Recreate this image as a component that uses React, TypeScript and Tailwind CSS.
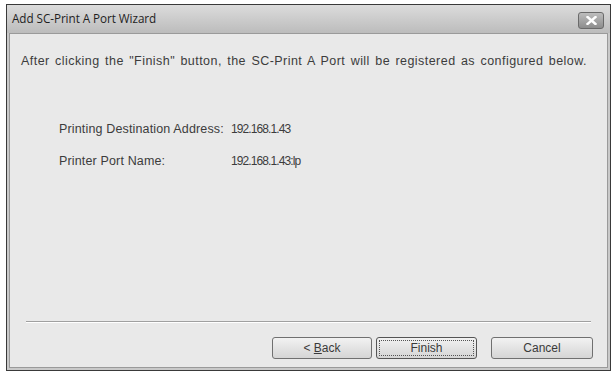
export default function App() {
  return (
    <div className="w-[615px] h-[373px] bg-white pt-[4px] pl-[6px] font-['Liberation_Sans',Arial,sans-serif]">
      <div className="w-[605px] h-[367px] border border-[#3a3a3a] flex flex-col bg-[#c9c9c9]">
        {/* Title bar */}
        <div className="h-[28px] flex items-center justify-between pl-[5px] pr-[6px] bg-gradient-to-b from-[#dcdcdc] to-[#bcbcbc]">
          <span className="text-[11.7px] text-[#1e1e1e] font-['Open_Sans',sans-serif] tracking-[-0.05px]">Add SC-Print A Port Wizard</span>
          <div className="w-[26px] h-[17px] mt-[2px] rounded-[3px] border border-[#6a6a6a] bg-gradient-to-b from-[#bdbdbd] to-[#8d8d8d] flex items-center justify-center">
            <svg width="11" height="9" viewBox="0 0 11 9">
              <path d="M1.5 1 L9.5 8 M9.5 1 L1.5 8" stroke="#fff" strokeWidth="2.4" strokeLinecap="square" />
            </svg>
          </div>
        </div>
        {/* Client area */}
        <div className="flex-1 mx-[2px] mb-[2px] border border-[#9a9a9a] bg-[#e9e9e9] flex flex-col text-[12.5px] text-[#3c3c3c]">
          <p className="mt-[18px] ml-[11px] tracking-[0.45px] [word-spacing:1.5px]">
            After clicking the "Finish" button, the SC-Print A Port will be registered as configured below.
          </p>
          <div className="mt-[49px] ml-[49px] grid grid-cols-[172px_1fr] gap-y-[13px] items-baseline tracking-[0.15px]">
            <span>Printing Destination Address:</span>
            <span className="text-[12px] tracking-[-0.9px]">192.168.1.43</span>
            <span>Printer Port Name:</span>
            <span className="text-[12px] tracking-[-0.9px]">192.168.1.43:lp</span>
          </div>
          <div className="flex-1" />
          <div className="mx-[16px] border-t border-t-[#a0a0a0] border-b border-b-white" />
          <div className="flex justify-end gap-[4px] pr-[14px] pt-[14px] pb-[8px] text-[12px]">
            <button className="w-[100px] h-[22px] rounded-[3px] border border-[#707070] bg-gradient-to-b from-[#f2f2f2] to-[#d5d5d5] text-[#3a3a3a]">
              &lt; <u>B</u>ack
            </button>
            <button className="w-[101px] h-[22px] rounded-[3px] border border-[#555] bg-gradient-to-b from-[#f2f2f2] to-[#d5d5d5] text-[#3a3a3a] p-[2px]">
              <span className="flex w-full h-full items-center justify-center border border-dotted border-[#555]">Finish</span>
            </button>
            <button className="ml-[10px] w-[102px] h-[22px] rounded-[3px] border border-[#707070] bg-gradient-to-b from-[#f2f2f2] to-[#d5d5d5] text-[#3a3a3a]">
              Cancel
            </button>
          </div>
        </div>
      </div>
    </div>
  );
}
